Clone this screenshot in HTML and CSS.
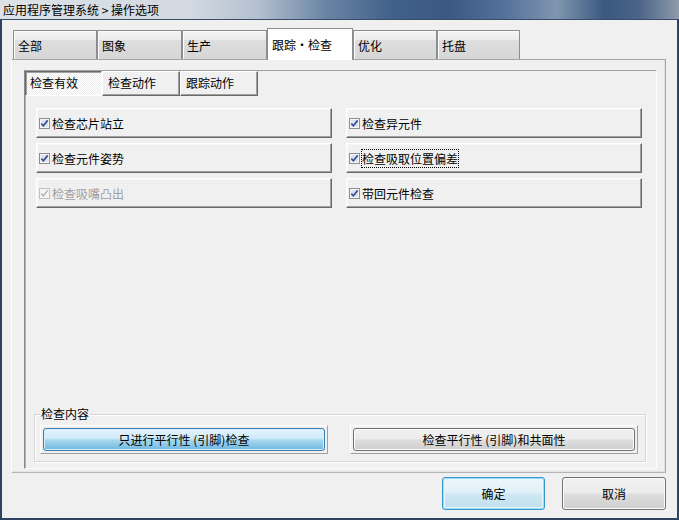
FILE: index.html
```html
<!DOCTYPE html>
<html lang="zh-CN">
<head>
<meta charset="utf-8">
<title>操作选项</title>
<link rel="stylesheet" href="styles.css">
</head>
<body>
<div class="window">
  <div class="titlebar">应用程序管理系统 &gt; 操作选项</div>
  <div class="client">
    <div class="tabs">
      <div class="tab w1">全部</div>
      <div class="tab w2">图象</div>
      <div class="tab w2">生产</div>
      <div class="tab w3 active">跟踪・检查</div>
      <div class="tab w1">优化</div>
      <div class="tab w4">托盘</div>
    </div>
    <div class="panel">
      <div class="subpanel">
        <div class="subtabs">
          <div class="subtab s1 active">检查有效</div>
          <div class="subtab s2">检查动作</div>
          <div class="subtab s2">跟踪动作</div>
        </div>
        <div class="options">
          <div class="opt">
            <svg class="cb" width="11" height="11" viewBox="0 0 11 11"><rect x="0.5" y="0.5" width="10" height="10" fill="#f6f6f6" stroke="#8e8f8f"/><rect x="2" y="2" width="7" height="7" fill="#dde4ee"/><path d="M2.3 5.6 4.4 7.8 8.7 2.4" fill="none" stroke="#3b4f9e" stroke-width="1.7"/></svg>
            <span>检查芯片站立</span>
          </div>
          <div class="opt">
            <svg class="cb" width="11" height="11" viewBox="0 0 11 11"><rect x="0.5" y="0.5" width="10" height="10" fill="#f6f6f6" stroke="#8e8f8f"/><rect x="2" y="2" width="7" height="7" fill="#dde4ee"/><path d="M2.3 5.6 4.4 7.8 8.7 2.4" fill="none" stroke="#3b4f9e" stroke-width="1.7"/></svg>
            <span>检查异元件</span>
          </div>
          <div class="opt">
            <svg class="cb" width="11" height="11" viewBox="0 0 11 11"><rect x="0.5" y="0.5" width="10" height="10" fill="#f6f6f6" stroke="#8e8f8f"/><rect x="2" y="2" width="7" height="7" fill="#dde4ee"/><path d="M2.3 5.6 4.4 7.8 8.7 2.4" fill="none" stroke="#3b4f9e" stroke-width="1.7"/></svg>
            <span>检查元件姿势</span>
          </div>
          <div class="opt">
            <svg class="cb" width="11" height="11" viewBox="0 0 11 11"><rect x="0.5" y="0.5" width="10" height="10" fill="#f6f6f6" stroke="#8e8f8f"/><rect x="2" y="2" width="7" height="7" fill="#dde4ee"/><path d="M2.3 5.6 4.4 7.8 8.7 2.4" fill="none" stroke="#3b4f9e" stroke-width="1.7"/></svg>
            <span class="focus">检查吸取位置偏差</span>
          </div>
          <div class="opt disabled">
            <svg class="cb" width="11" height="11" viewBox="0 0 11 11"><rect x="0.5" y="0.5" width="10" height="10" fill="#f6f6f6" stroke="#c2c2c2"/><path d="M2.3 5.6 4.4 7.8 8.7 2.4" fill="none" stroke="#b4b4b4" stroke-width="1.5"/></svg>
            <span>检查吸嘴凸出</span>
          </div>
          <div class="opt">
            <svg class="cb" width="11" height="11" viewBox="0 0 11 11"><rect x="0.5" y="0.5" width="10" height="10" fill="#f6f6f6" stroke="#8e8f8f"/><rect x="2" y="2" width="7" height="7" fill="#dde4ee"/><path d="M2.3 5.6 4.4 7.8 8.7 2.4" fill="none" stroke="#3b4f9e" stroke-width="1.7"/></svg>
            <span>带回元件检查</span>
          </div>
        </div>
        <fieldset class="group">
          <legend>检查内容</legend>
          <div class="btnframe"><button class="btn blue">只进行平行性 (引脚)检查</button></div>
          <div class="btnframe"><button class="btn">检查平行性 (引脚)和共面性</button></div>
        </fieldset>
      </div>
    </div>
    <div class="actions">
      <button class="btn big ok">确定</button>
      <button class="btn big cancel">取消</button>
    </div>
  </div>
</div>
</body>
</html>
```

FILE: styles.css
```css
* { box-sizing: border-box; }

html, body {
  margin: 0;
  padding: 0;
  background: #f0f0f0;
}

body {
  font-family: "Noto Sans CJK SC", "Noto Sans", "Liberation Sans", sans-serif;
  font-size: 12px;
  color: #000;
}

.window {
  width: 679px;
  height: 520px;
  display: flex;
  flex-direction: column;
}

.titlebar {
  height: 19px;
  line-height: 19px;
  padding-left: 3px;
  white-space: nowrap;
  background: linear-gradient(90deg, #dde2e8 0%, #d2d9e1 28%, #b3c0cf 38%, #6a84a5 48%, #40608a 58%, #3b5883 66%, #52709a 74%, #8096b0 82%, #3b5880 89%, #4a6388 94%, #8e9bab 100%);
}

.client {
  flex: 1;
  display: flex;
  flex-direction: column;
  background: #f0f0f0;
  border-top: 1px solid #3a4d68;
  border-left: 2px solid #2e4262;
  border-right: 2px solid #2e4262;
  border-bottom: 2px solid #2e4262;
}

/* ---------- main tabs ---------- */
.tabs {
  display: flex;
  align-items: flex-end;
  padding: 8px 0 0 11px;
  margin-bottom: -1px;
  position: relative;
  z-index: 1;
}

.tab {
  height: 29px;
  margin-bottom: 1px;
  padding: 8px 0 0 4px;
  line-height: 14px;
  white-space: nowrap;
  border: 1px solid #8c8e94;
  border-bottom: none;
  background: linear-gradient(#f4f4f4 0%, #ececec 30%, #dedede 34%, #d6d6d6 100%);
  box-shadow: inset 1px 1px 0 #fbfbfb;
}

.tab.w1 { width: 84px; }
.tab.w2 { width: 85px; }
.tab.w3 { width: 86px; }
.tab.w4 { width: 83px; }

.tab.active {
  height: 32px;
  margin-bottom: 0;
  padding-top: 9px;
  background: #fff;
  box-shadow: none;
}

/* ---------- tab panel ---------- */
.panel {
  margin-left: 9px;
  width: 655px;
  height: 414px;
  display: flex;
  padding: 10px 8px 3px 12px;
  border-top: 1px solid #a4a4a4;
  border-left: 1px solid #ffffff;
  border-right: 1px solid #a4a4a4;
  border-bottom: 1px solid #b4b4b4;
  box-shadow: inset -1px -1px 0 #e3e3e3;
}

.subpanel {
  flex: 1;
  display: flex;
  flex-direction: column;
  border-top: 1px solid #a0a0a0;
  border-left: 1px solid #8a8a8a;
  border-right: 1px solid #ffffff;
  border-bottom: 1px solid #ffffff;
  box-shadow: inset 1px 0 0 #b0b0b0;
}

.subtabs {
  display: flex;
  height: 25px;
}

.subtab {
  height: 25px;
  padding: 4px 0 0 4px;
  line-height: 14px;
  white-space: nowrap;
  border: 1px solid;
  border-color: #ffffff #696969 #696969 #ffffff;
  box-shadow: inset -1px -1px 0 #a0a0a0;
  background: #f0f0f0;
}

.subtab.s1 { width: 77px; }
.subtab.s2 { width: 78px; padding-left: 5px; }

.subtab.active {
  border-color: #696969 #ffffff #ffffff #696969;
  box-shadow: inset 1px 1px 0 #a0a0a0;
  background: repeating-conic-gradient(#ffffff 0 25%, #ededed 0 50%) 0 0 / 2px 2px;
}

/* ---------- options ---------- */
.options {
  display: grid;
  grid-template-columns: 296px 296px;
  column-gap: 14px;
  row-gap: 5px;
  margin: 12px 0 0 11px;
}

.opt {
  height: 30px;
  display: flex;
  align-items: center;
  gap: 2px;
  padding-left: 2px;
  white-space: nowrap;
  border: 1px solid;
  border-color: #ffffff #696969 #696969 #ffffff;
  box-shadow: inset -1px -1px 0 #a0a0a0, inset 1px 1px 0 #f7f7f7;
}

.opt .cb { flex: none; }

.opt.disabled { color: #a0a0a0; }

.focus {
  outline: 1px dotted #000;
  outline-offset: 0;
}

/* ---------- group ---------- */
.group {
  margin: auto 10px 6px 9px;
  padding: 4px 7px 7px 5px;
  min-width: 0;
  display: flex;
  gap: 22px;
  border: 1px solid #d5d5d5;
  box-shadow: inset 1px 1px 0 #ffffff, 1px 1px 0 #ffffff;
}

.group legend {
  padding: 0 1px;
  line-height: 14px;
}

.btnframe {
  flex: 1;
  height: 29px;
  padding: 2px;
  border: 1px solid;
  border-color: #ffffff #a0a0a0 #a0a0a0 #ffffff;
}

.btn {
  font: inherit;
  color: #000;
  margin: 0;
  padding: 0;
  border: 1px solid #707070;
  border-radius: 3px;
  background: linear-gradient(#f2f2f2 0%, #ebebeb 48%, #dddddd 52%, #cfcfcf 100%);
  box-shadow: inset 0 0 0 1px #fcfcfc;
  white-space: nowrap;
}

.btnframe .btn {
  width: 100%;
  height: 100%;
}

.btn.blue {
  border-color: #3c7fb1;
  background: linear-gradient(#e6f4fb 0%, #cde9f7 45%, #a9d8f1 52%, #6fb7df 100%);
  box-shadow: inset 0 0 0 1px #d4edfa;
}

/* ---------- dialog buttons ---------- */
.actions {
  display: flex;
  justify-content: flex-end;
  gap: 17px;
  margin-top: 4px;
  padding-right: 11px;
}

.btn.big {
  height: 33px;
}

.btn.ok {
  width: 103px;
  border-color: #3399cc;
  background: linear-gradient(#ecf6fb 0%, #e0f0f8 48%, #cfe8f4 52%, #bfdfee 100%);
  box-shadow: inset 0 0 0 1px #9fdcf7, inset 0 0 0 2px #e8f6fc;
}

.btn.cancel {
  width: 104px;
}
```
